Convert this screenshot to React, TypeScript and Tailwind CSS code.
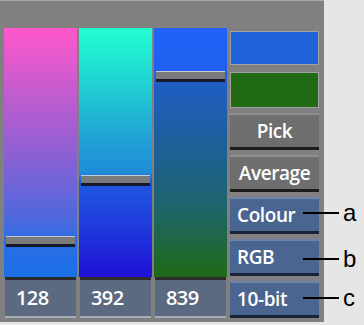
import React from "react";

const bars = [
  {
    value: "128",
    handle: 208,
    bg: "bg-[linear-gradient(180deg,#ff58cb_0%,#c55ccf_25%,#8e60d3_50%,#4a69de_78%,#2a6ee4_86%,#1a70e8_100%)]",
  },
  {
    value: "392",
    handle: 147,
    bg: "bg-[linear-gradient(180deg,#22ffd2_0%,#20d2d4_22%,#21a6d6_42%,#1f8cd8_58%,#1e58e0_62%,#1f3adc_80%,#2010d6_100%)]",
  },
  {
    value: "839",
    handle: 43,
    bg: "bg-[linear-gradient(180deg,#2062fa_0%,#2060ee_17%,#1f5ec4_22%,#1e5f9c_45%,#1e6470_70%,#1f6a18_100%)]",
  },
];

function Bar({ value, handle, bg }: { value: string; handle: number; bg: string }) {
  return (
    <div className="flex w-[73px] flex-col">
      <div className={`relative h-[249px] ${bg}`}>
        <div
          className="absolute left-[2px] right-[2px] h-[11px] border-t border-b-[3px] border-t-[#c4ccd8] border-b-[#141a2c] bg-[#7b7b7b]"
          style={{ top: handle }}
        />
      </div>
      <div className="mx-[1px] flex h-[41px] items-center border-t-[3px] border-b-2 border-t-[#2c2c2c] border-b-[#a4acb6] bg-[#5b6a80] px-[11px] pb-[1px] text-[20px] font-semibold tracking-[-0.6px] text-white">
        {value}
      </div>
    </div>
  );
}

function Btn({ label, blue }: { label: string; blue?: boolean }) {
  return (
    <div
      className={
        blue
          ? "flex h-[37px] items-center border-t-2 border-b-[3px] border-t-[#6e84aa] border-b-[#18223a] bg-[#4a6590] px-[7px] text-[19px] font-semibold tracking-[-0.4px] text-white"
          : "flex h-[37px] items-center justify-center border-t-2 border-b-[3px] border-t-[#8e8e8e] border-b-[#1c1c1c] bg-[#6e6e6e] text-[19px] font-semibold tracking-[-0.4px] text-white"
      }
    >
      {label}
    </div>
  );
}

const callouts = [
  { letter: "a", y: 213 },
  { letter: "b", y: 259 },
  { letter: "c", y: 298 },
];

export default function App() {
  return (
    <div className="relative h-[325px] w-[364px] overflow-hidden bg-[#e6e6e6] font-['Open_Sans',sans-serif]">
      <div className="h-[322px] w-[324px] border-t border-t-[#a6a6a6] bg-[#808080] pl-[4px] pt-[27px]">
        <div className="flex">
          <div className="flex gap-[2px]">
            {bars.map((b) => (
              <Bar key={b.value} {...b} />
            ))}
          </div>
          <div className="ml-[3px] flex w-[89px] flex-col pt-[3px]">
            <div className="h-[34px] border border-[#a2a2a2] bg-[#1f62d9]" />
            <div className="mt-[7px] h-[36px] border border-[#a2a2a2] bg-[#1f6a12]" />
            <div className="mt-[5px] flex flex-col gap-[5px]">
              <Btn label="Pick" />
              <Btn label="Average" />
              <Btn label="Colour" blue />
              <Btn label="RGB" blue />
              <Btn label="10-bit" blue />
            </div>
          </div>
        </div>
      </div>
      {callouts.map((c) => (
        <div key={c.letter} className="absolute left-[303px] flex items-center" style={{ top: c.y - 14 }}>
          <div className="h-[2px] w-[36px] bg-black" />
          <span className="ml-[4px] font-['Liberation_Sans',sans-serif] text-[24px] leading-[28px] text-black">
            {c.letter}
          </span>
        </div>
      ))}
    </div>
  );
}
